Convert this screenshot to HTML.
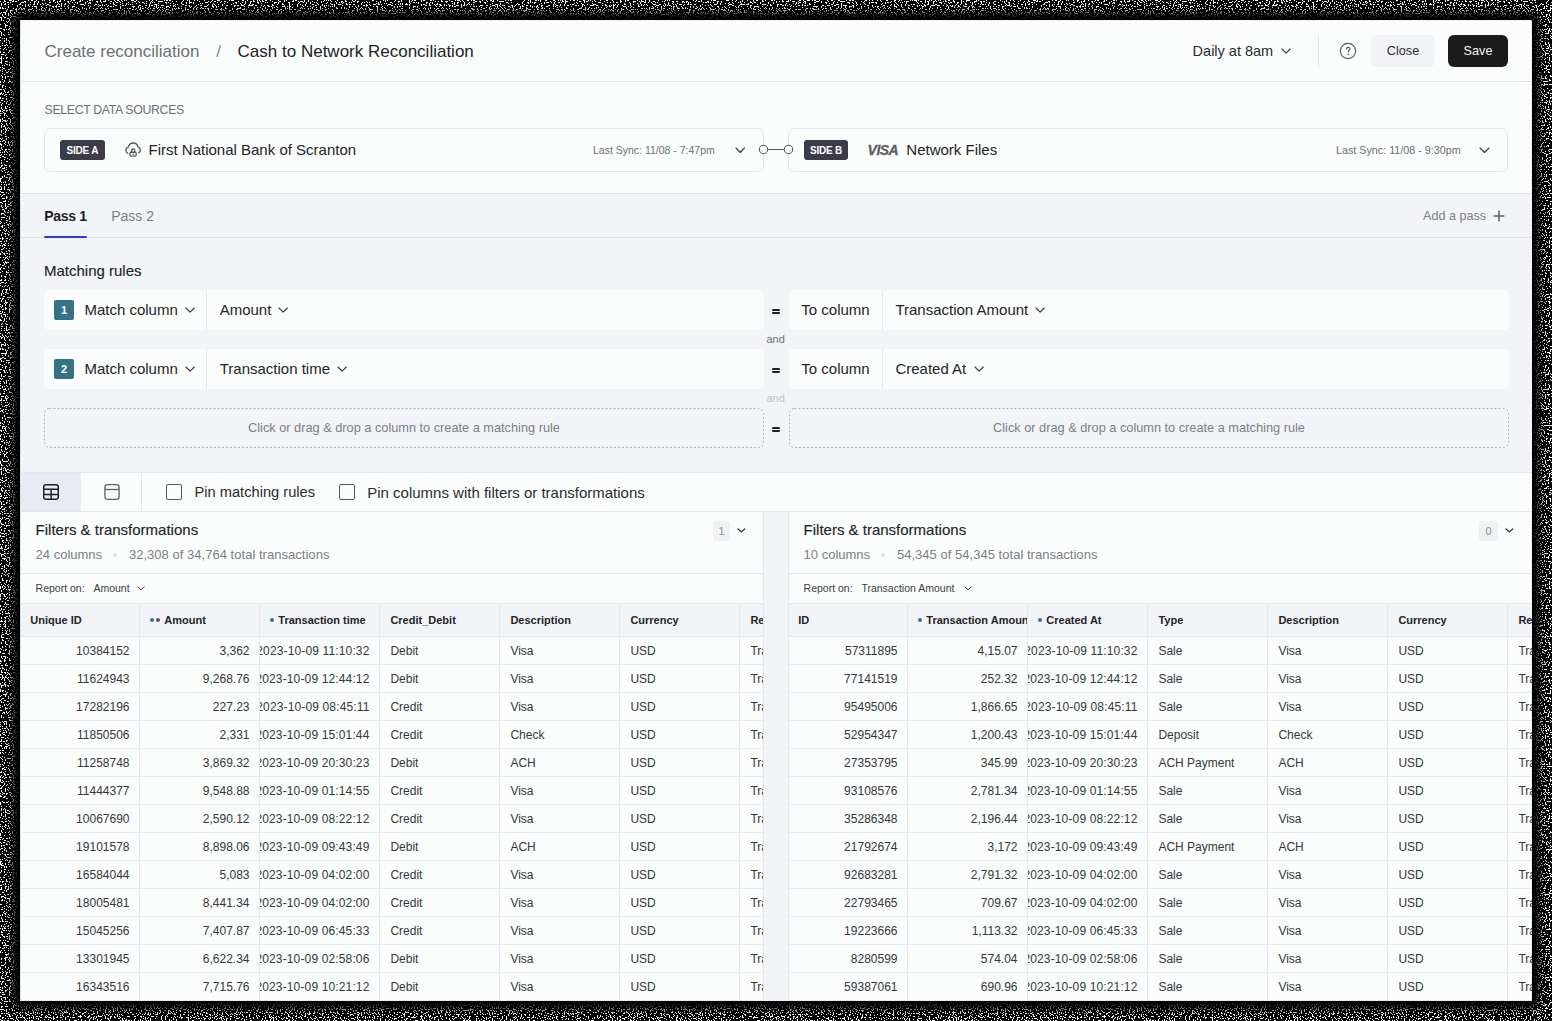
<!DOCTYPE html>
<html><head><meta charset="utf-8">
<style>
*{box-sizing:border-box;margin:0;padding:0}
html,body{width:1552px;height:1021px;overflow:hidden;background:#000;font-family:"Liberation Sans",sans-serif;color:#232526}
#noise{position:absolute;left:0;top:0;width:1552px;height:1021px}
#card{position:absolute;left:20px;top:20px;width:1512px;height:981px;background:#fbfcfc;border-radius:2px;box-shadow:inset 0 1px 0 #eef1f6, inset -1px 0 0 #eef1f6}
.t{position:absolute;white-space:nowrap;line-height:1}
.r{position:absolute}
.clip{position:absolute;overflow:hidden}
</style></head><body>
<svg id="noise" width="1552" height="1021">
<defs>
<filter id="nz" x="0" y="0" width="100%" height="100%">
<feTurbulence type="fractalNoise" baseFrequency="0.75" numOctaves="1" seed="3" result="n"/>
<feColorMatrix type="matrix" values="0 0 0 0 1  0 0 0 0 1  0 0 0 0 1  3 0 0 0 -1.25"/>
<feComponentTransfer><feFuncA type="discrete" tableValues="0 1"/></feComponentTransfer>
</filter>
<filter id="bl"><feGaussianBlur stdDeviation="4"/></filter>
</defs>
<rect width="1552" height="1021" fill="#000"/>
<rect width="1552" height="1021" filter="url(#nz)"/>
<rect x="12" y="12" width="1528" height="997" rx="8" fill="#000" filter="url(#bl)"/>
</svg>
<div id="card"></div>
<div class="t" style="left:44.50px;top:42.81px;font-size:17px;color:#6c7173;">Create reconciliation</div>
<div class="t" style="left:216.30px;top:42.81px;font-size:17px;color:#85898c;">/</div>
<div class="t" style="left:237.60px;top:42.81px;font-size:17px;color:#222425;">Cash to Network Reconciliation</div>
<div class="t" style="left:1192.60px;top:43.73px;font-size:14.5px;color:#2a2c2d;">Daily at 8am</div>
<svg class="r" style="left:1279.8px;top:46.8px" width="12.200000000000045" height="8.100000000000001"><polyline points="2,2 6.100000000000023,6.100000000000001 10.200000000000045,2" fill="none" stroke="#3a3c3e" stroke-width="1.1700000000000002" stroke-linecap="round" stroke-linejoin="round"/></svg>
<div class="r" style="left:1318px;top:35px;width:1px;height:32px;background:#e1e3ea;"></div>
<svg class="r" style="left:1338px;top:41px" width="20" height="20"><circle cx="10" cy="10" r="7.6" fill="none" stroke="#55595c" stroke-width="1.15"/><path d="M8.5 8.1 C8.5 7 9.3 6.3 10.2 6.3 C11.1 6.3 11.9 7 11.9 7.9 C11.9 9.1 10.4 9.3 10.3 10.9" fill="none" stroke="#55595c" stroke-width="1.15" stroke-linecap="round"/><circle cx="10.3" cy="13.4" r="0.8" fill="#55595c"/></svg>
<div class="r" style="left:1371px;top:35px;width:64px;height:32px;background:#f2f3f7;border-radius:6px"></div>
<div class="t" style="left:1103.00px;width:600px;text-align:center;top:45.25px;font-size:12.7px;color:#2a2c2d;">Close</div>
<div class="r" style="left:1448px;top:35px;width:60px;height:32px;background:#1b1b1b;border-radius:6px"></div>
<div class="t" style="left:1178.00px;width:600px;text-align:center;top:45.25px;font-size:12.7px;color:#f4f4f4;">Save</div>
<div class="r" style="left:20px;top:81px;width:1512px;height:1px;background:#e4e6ee;"></div>
<div class="t" style="left:44.60px;top:103.89px;font-size:12.3px;color:#6c7173;letter-spacing:-0.33px;">SELECT DATA SOURCES</div>
<div class="r" style="left:44px;top:128px;width:720px;height:44px;background:#fbfcfc;border:1px solid #e3e5ed;border-radius:6px;box-sizing:border-box"></div>
<div class="r" style="left:788px;top:128px;width:720px;height:44px;background:#fbfcfc;border:1px solid #e3e5ed;border-radius:6px;box-sizing:border-box"></div>
<div class="r" style="left:60px;top:140px;width:45px;height:20px;background:#3b3c47;border-radius:3px"></div>
<div class="t" style="left:-217.70px;width:600px;text-align:center;top:145.73px;font-size:10px;color:#ffffff;font-weight:700;letter-spacing:-0.2px;">SIDE A</div>
<div class="r" style="left:804px;top:140px;width:44px;height:20px;background:#3b3c47;border-radius:3px"></div>
<div class="t" style="left:526.00px;width:600px;text-align:center;top:145.73px;font-size:10px;color:#ffffff;font-weight:700;letter-spacing:-0.2px;">SIDE B</div>
<svg class="r" style="left:124px;top:141px" width="18" height="18"><path d="M3.6 12.4 C2.5 11.7 1.9 10.5 1.9 9.2 C1.9 7.7 2.9 6.6 4.3 6.2 C4.9 3.6 6.9 2 9.2 2 C11.5 2 13.3 3.5 13.9 5.8 C15.4 6.3 16.3 7.7 16.3 9.2 C16.3 10.3 15.7 11.3 14.6 11.8" fill="none" stroke="#55595c" stroke-width="1.3" stroke-linecap="round"/><rect x="5.95" y="11.25" width="6.2" height="3.9" rx="1" fill="none" stroke="#55595c" stroke-width="1.3"/><path d="M7.6 11.25 V9.6 A1.6 1.6 0 0 1 10.8 9.6 V11.25" fill="none" stroke="#55595c" stroke-width="1.3"/><circle cx="9.3" cy="13.3" r="0.75" fill="#55595c"/></svg>
<div class="t" style="left:148.50px;top:142.40px;font-size:15px;color:#232526;">First National Bank of Scranton</div>
<div class="t" style="left:593.00px;top:145.31px;font-size:10.5px;color:#6c7173;">Last Sync: 11/08 - 7:47pm</div>
<svg class="r" style="left:733.5px;top:145.9px" width="12.5" height="8.5"><polyline points="2,2 6.25,6.5 10.5,2" fill="none" stroke="#3a3c3e" stroke-width="1.1700000000000002" stroke-linecap="round" stroke-linejoin="round"/></svg>
<svg class="r" style="left:756px;top:142px" width="40" height="16"><line x1="11.5" y1="7.5" x2="28.5" y2="7.5" stroke="#595d60" stroke-width="1.1"/><circle cx="7.5" cy="7.5" r="4.2" fill="#fbfcfc" stroke="#5a5e61" stroke-width="1.1"/><circle cx="32.5" cy="7.5" r="4.2" fill="#fbfcfc" stroke="#5a5e61" stroke-width="1.1"/></svg>
<div class="t" style="left:867.60px;top:143.05px;font-size:14px;color:#5b6064;font-weight:700;letter-spacing:-0.55px;font-style:italic;-webkit-text-stroke:0.3px #5b6064;">VISA</div>
<div class="t" style="left:906.30px;top:142.40px;font-size:15px;color:#232526;">Network Files</div>
<div class="t" style="left:1336.00px;top:145.10px;font-size:10.75px;color:#6c7173;">Last Sync: 11/08 - 9:30pm</div>
<svg class="r" style="left:1478.0px;top:145.9px" width="13.0" height="8.5"><polyline points="2,2 6.5,6.5 11.0,2" fill="none" stroke="#3a3c3e" stroke-width="1.1700000000000002" stroke-linecap="round" stroke-linejoin="round"/></svg>
<div class="r" style="left:20px;top:193px;width:1512px;height:1px;background:#e4e6ee;"></div>
<div class="r" style="left:20px;top:194px;width:1512px;height:278px;background:#f3f4f8;"></div>
<div class="t" style="left:44.20px;top:208.85px;font-size:14px;color:#1d1e1f;font-weight:700;letter-spacing:-0.3px;">Pass 1</div>
<div class="t" style="left:111.20px;top:208.85px;font-size:14px;color:#7c8083;">Pass 2</div>
<div class="r" style="left:20px;top:237px;width:1512px;height:1px;background:#e2e4ea;"></div>
<div class="r" style="left:44px;top:236px;width:43px;height:2px;background:#3338d8;border-radius:1px"></div>
<div class="t" style="left:1423.00px;top:209.73px;font-size:12.6px;color:#7c8083;">Add a pass</div>
<svg class="r" style="left:1492px;top:209px" width="14" height="14"><path d="M7 2.2 V11.8 M2.2 7 H11.8" stroke="#5c6063" stroke-width="1.5" stroke-linecap="round"/></svg>
<div class="t" style="left:44.00px;top:262.90px;font-size:15px;color:#232526;-webkit-text-stroke:0.15px #232526;">Matching rules</div>
<div class="r" style="left:44px;top:290px;width:720px;height:40px;background:#fbfcfc;border-radius:5px"></div>
<div class="r" style="left:789px;top:290px;width:720px;height:40px;background:#fbfcfc;border-radius:5px"></div>
<div class="r" style="left:54px;top:300px;width:20px;height:20px;background:#357285;border-radius:2px"></div>
<div class="t" style="left:-236.00px;width:600px;text-align:center;top:304.99px;font-size:11px;color:#ffffff;font-weight:700;">1</div>
<div class="t" style="left:84.40px;top:302.10px;font-size:15px;color:#232526;">Match column</div>
<svg class="r" style="left:183.8px;top:305.59999999999997px" width="12.299999999999983" height="8.200000000000045"><polyline points="2,2 6.1499999999999915,6.2000000000000455 10.299999999999983,2" fill="none" stroke="#3a3c3e" stroke-width="1.1700000000000002" stroke-linecap="round" stroke-linejoin="round"/></svg>
<div class="r" style="left:206px;top:290px;width:1px;height:40px;background:#e6e8ee;"></div>
<div class="t" style="left:219.70px;top:302.10px;font-size:15px;color:#232526;">Amount</div>
<svg class="r" style="left:277.2px;top:305.59999999999997px" width="12.300000000000011" height="8.200000000000045"><polyline points="2,2 6.150000000000006,6.2000000000000455 10.300000000000011,2" fill="none" stroke="#3a3c3e" stroke-width="1.1700000000000002" stroke-linecap="round" stroke-linejoin="round"/></svg>
<div class="t" style="left:801.30px;top:302.10px;font-size:15px;color:#232526;">To column</div>
<div class="r" style="left:882px;top:290px;width:1px;height:40px;background:#e6e8ee;"></div>
<div class="t" style="left:895.40px;top:302.10px;font-size:15px;color:#232526;">Transaction Amount</div>
<svg class="r" style="left:1033.5px;top:305.59999999999997px" width="12.299999999999955" height="8.200000000000045"><polyline points="2,2 6.149999999999977,6.2000000000000455 10.299999999999955,2" fill="none" stroke="#3a3c3e" stroke-width="1.1700000000000002" stroke-linecap="round" stroke-linejoin="round"/></svg>
<div class="r" style="left:772px;top:308.5px;width:8px;height:2.1000000000000227px;background:#1e1f20;border-radius:1px"></div>
<div class="r" style="left:772px;top:312.1px;width:8px;height:2.099999999999966px;background:#1e1f20;border-radius:1px"></div>
<div class="t" style="left:766.50px;top:333.69px;font-size:11px;color:#6c7173;">and</div>
<div class="r" style="left:44px;top:349px;width:720px;height:40px;background:#fbfcfc;border-radius:5px"></div>
<div class="r" style="left:789px;top:349px;width:720px;height:40px;background:#fbfcfc;border-radius:5px"></div>
<div class="r" style="left:54px;top:359px;width:20px;height:20px;background:#357285;border-radius:2px"></div>
<div class="t" style="left:-236.00px;width:600px;text-align:center;top:363.99px;font-size:11px;color:#ffffff;font-weight:700;">2</div>
<div class="t" style="left:84.40px;top:361.10px;font-size:15px;color:#232526;">Match column</div>
<svg class="r" style="left:183.8px;top:364.59999999999997px" width="12.299999999999983" height="8.200000000000045"><polyline points="2,2 6.1499999999999915,6.2000000000000455 10.299999999999983,2" fill="none" stroke="#3a3c3e" stroke-width="1.1700000000000002" stroke-linecap="round" stroke-linejoin="round"/></svg>
<div class="r" style="left:206px;top:349px;width:1px;height:40px;background:#e6e8ee;"></div>
<div class="t" style="left:219.70px;top:361.10px;font-size:15px;color:#232526;">Transaction time</div>
<svg class="r" style="left:335.8px;top:364.59999999999997px" width="12.300000000000011" height="8.200000000000045"><polyline points="2,2 6.150000000000006,6.2000000000000455 10.300000000000011,2" fill="none" stroke="#3a3c3e" stroke-width="1.1700000000000002" stroke-linecap="round" stroke-linejoin="round"/></svg>
<div class="t" style="left:801.30px;top:361.10px;font-size:15px;color:#232526;">To column</div>
<div class="r" style="left:882px;top:349px;width:1px;height:40px;background:#e6e8ee;"></div>
<div class="t" style="left:895.40px;top:361.10px;font-size:15px;color:#232526;">Created At</div>
<svg class="r" style="left:973.0px;top:364.59999999999997px" width="12.299999999999955" height="8.200000000000045"><polyline points="2,2 6.149999999999977,6.2000000000000455 10.299999999999955,2" fill="none" stroke="#3a3c3e" stroke-width="1.1700000000000002" stroke-linecap="round" stroke-linejoin="round"/></svg>
<div class="r" style="left:772px;top:367.5px;width:8px;height:2.1000000000000227px;background:#1e1f20;border-radius:1px"></div>
<div class="r" style="left:772px;top:371.1px;width:8px;height:2.099999999999966px;background:#1e1f20;border-radius:1px"></div>
<div class="t" style="left:766.50px;top:392.69px;font-size:11px;color:#bfc2c6;">and</div>
<svg class="r" style="left:44px;top:408px" width="720" height="40"><rect x="0.5" y="0.5" width="719" height="39" rx="5" fill="none" stroke="#aeb1b7" stroke-dasharray="2 2"/></svg>
<svg class="r" style="left:789px;top:408px" width="720" height="40"><rect x="0.5" y="0.5" width="719" height="39" rx="5" fill="none" stroke="#aeb1b7" stroke-dasharray="2 2"/></svg>
<div class="t" style="left:104.00px;width:600px;text-align:center;top:421.51px;font-size:12.75px;color:#7a7f82;">Click or drag &amp; drop a column to create a matching rule</div>
<div class="t" style="left:849.00px;width:600px;text-align:center;top:421.51px;font-size:12.75px;color:#7a7f82;">Click or drag &amp; drop a column to create a matching rule</div>
<div class="r" style="left:772px;top:426.5px;width:8px;height:2.1000000000000227px;background:#1e1f20;border-radius:1px"></div>
<div class="r" style="left:772px;top:430.1px;width:8px;height:2.099999999999966px;background:#1e1f20;border-radius:1px"></div>
<div class="r" style="left:20px;top:472px;width:1512px;height:1px;background:#e4e6ee;"></div>
<div class="r" style="left:20px;top:473px;width:1512px;height:38px;background:#fbfcfc;"></div>
<div class="r" style="left:20px;top:473px;width:61px;height:38px;background:#e8ebf3;"></div>
<div class="r" style="left:141px;top:473px;width:1px;height:38px;background:#e4e6ee;"></div>
<svg class="r" style="left:41px;top:482px" width="20" height="20"><rect x="2.7" y="2.7" width="14.6" height="14.6" rx="2.6" fill="none" stroke="#1e1f20" stroke-width="1.4"/><path d="M2.7 7.2 H17.3 M2.7 12.5 H17.3 M10.1 7.2 V17.3" stroke="#1e1f20" stroke-width="1.4"/></svg>
<svg class="r" style="left:102px;top:482px" width="20" height="20"><rect x="2.9" y="2.7" width="14.2" height="14.6" rx="2.6" fill="none" stroke="#5f6366" stroke-width="1.3"/><path d="M2.9 7.5 H17.1" stroke="#5f6366" stroke-width="1.3"/></svg>
<div class="r" style="left:166px;top:484px;width:16px;height:16px;background:transparent;border:1.3px solid #54585c;border-radius:2px;box-sizing:border-box"></div>
<div class="t" style="left:194.50px;top:484.99px;font-size:14.66px;color:#2a2c2e;">Pin matching rules</div>
<div class="r" style="left:339px;top:484px;width:16px;height:16px;background:transparent;border:1.3px solid #54585c;border-radius:2px;box-sizing:border-box"></div>
<div class="t" style="left:367.20px;top:484.70px;font-size:15px;color:#2a2c2e;">Pin columns with filters or transformations</div>
<div class="r" style="left:20px;top:511px;width:1512px;height:1px;background:#e4e6ee;"></div>
<div class="r" style="left:764px;top:512px;width:24px;height:489px;background:#f3f4f8;"></div>
<div class="r" style="left:763px;top:511px;width:1px;height:490px;background:#e4e6ee;"></div>
<div class="r" style="left:788px;top:511px;width:1px;height:490px;background:#e4e6ee;"></div>
<div class="t" style="left:35.60px;top:522.00px;font-size:15px;color:#232526;-webkit-text-stroke:0.15px #232526;">Filters &amp; transformations</div>
<div class="t" style="left:35.60px;top:548.20px;font-size:13px;color:#7c8083;">24 columns</div>
<div class="r" style="left:113.3px;top:553px;width:4px;height:4px;border-radius:2px;background:#dcdfe4"></div>
<div class="t" style="left:128.90px;top:548.20px;font-size:13px;color:#7c8083;letter-spacing:0.03px;">32,308 of 34,764 total transactions</div>
<div class="r" style="left:21px;top:573px;width:742px;height:1px;background:#e4e6ee;"></div>
<div class="t" style="left:35.60px;top:583.11px;font-size:10.5px;color:#3c3f42;">Report on:</div>
<div class="t" style="left:93.40px;top:583.11px;font-size:10.5px;color:#3c3f42;">Amount</div>
<svg class="r" style="left:136.3px;top:585.4px" width="10.199999999999989" height="6.900000000000091"><polyline points="2,2 5.099999999999994,4.900000000000091 8.199999999999989,2" fill="none" stroke="#3c3f42" stroke-width="0.9900000000000001" stroke-linecap="round" stroke-linejoin="round"/></svg>
<div class="clip" style="left:21px;top:603px;width:742px;height:398px">
<div class="r" style="left:0;top:0;width:742px;height:34px;background:#f3f4f8;border-top:1px solid #e4e6ee;border-bottom:1px solid #e4e6ee"></div>
<div class="r" style="left:118px;top:0;width:1px;height:398px;background:#e6e8ee"></div>
<div class="r" style="left:238px;top:0;width:1px;height:398px;background:#e6e8ee"></div>
<div class="r" style="left:358px;top:0;width:1px;height:398px;background:#e6e8ee"></div>
<div class="r" style="left:478px;top:0;width:1px;height:398px;background:#e6e8ee"></div>
<div class="r" style="left:598px;top:0;width:1px;height:398px;background:#e6e8ee"></div>
<div class="r" style="left:718px;top:0;width:1px;height:398px;background:#e6e8ee"></div>
<div class="r" style="left:0;top:61px;width:742px;height:1px;background:#e8eaef"></div>
<div class="r" style="left:0;top:89px;width:742px;height:1px;background:#e8eaef"></div>
<div class="r" style="left:0;top:117px;width:742px;height:1px;background:#e8eaef"></div>
<div class="r" style="left:0;top:145px;width:742px;height:1px;background:#e8eaef"></div>
<div class="r" style="left:0;top:173px;width:742px;height:1px;background:#e8eaef"></div>
<div class="r" style="left:0;top:201px;width:742px;height:1px;background:#e8eaef"></div>
<div class="r" style="left:0;top:229px;width:742px;height:1px;background:#e8eaef"></div>
<div class="r" style="left:0;top:257px;width:742px;height:1px;background:#e8eaef"></div>
<div class="r" style="left:0;top:285px;width:742px;height:1px;background:#e8eaef"></div>
<div class="r" style="left:0;top:313px;width:742px;height:1px;background:#e8eaef"></div>
<div class="r" style="left:0;top:341px;width:742px;height:1px;background:#e8eaef"></div>
<div class="r" style="left:0;top:369px;width:742px;height:1px;background:#e8eaef"></div>
<div class="r" style="left:0;top:397px;width:742px;height:1px;background:#e8eaef"></div>
<div class="clip" style="left:0px;top:0;width:118px;height:398px">
<div class="t" style="left:9.30px;top:11.69px;font-size:11px;color:#232526;font-weight:700;">Unique ID</div>
<div class="t" style="right:9.50px;top:42.44px;font-size:12px;color:#35383a;">10384152</div>
<div class="t" style="right:9.50px;top:70.44px;font-size:12px;color:#35383a;">11624943</div>
<div class="t" style="right:9.50px;top:98.44px;font-size:12px;color:#35383a;">17282196</div>
<div class="t" style="right:9.50px;top:126.44px;font-size:12px;color:#35383a;">11850506</div>
<div class="t" style="right:9.50px;top:154.44px;font-size:12px;color:#35383a;">11258748</div>
<div class="t" style="right:9.50px;top:182.44px;font-size:12px;color:#35383a;">11444377</div>
<div class="t" style="right:9.50px;top:210.44px;font-size:12px;color:#35383a;">10067690</div>
<div class="t" style="right:9.50px;top:238.44px;font-size:12px;color:#35383a;">19101578</div>
<div class="t" style="right:9.50px;top:266.44px;font-size:12px;color:#35383a;">16584044</div>
<div class="t" style="right:9.50px;top:294.44px;font-size:12px;color:#35383a;">18005481</div>
<div class="t" style="right:9.50px;top:322.44px;font-size:12px;color:#35383a;">15045256</div>
<div class="t" style="right:9.50px;top:350.44px;font-size:12px;color:#35383a;">13301945</div>
<div class="t" style="right:9.50px;top:378.44px;font-size:12px;color:#35383a;">16343516</div>
</div>
<div class="clip" style="left:119px;top:0;width:119px;height:398px">
<div class="r" style="left:10.0px;top:15px;width:4px;height:4px;border-radius:2px;background:#357285"></div>
<div class="r" style="left:16.0px;top:15px;width:4px;height:4px;border-radius:2px;background:#55585b"></div>
<div class="t" style="left:24.30px;top:11.69px;font-size:11px;color:#232526;font-weight:700;">Amount</div>
<div class="t" style="right:9.50px;top:42.44px;font-size:12px;color:#35383a;">3,362</div>
<div class="t" style="right:9.50px;top:70.44px;font-size:12px;color:#35383a;">9,268.76</div>
<div class="t" style="right:9.50px;top:98.44px;font-size:12px;color:#35383a;">227.23</div>
<div class="t" style="right:9.50px;top:126.44px;font-size:12px;color:#35383a;">2,331</div>
<div class="t" style="right:9.50px;top:154.44px;font-size:12px;color:#35383a;">3,869.32</div>
<div class="t" style="right:9.50px;top:182.44px;font-size:12px;color:#35383a;">9,548.88</div>
<div class="t" style="right:9.50px;top:210.44px;font-size:12px;color:#35383a;">2,590.12</div>
<div class="t" style="right:9.50px;top:238.44px;font-size:12px;color:#35383a;">8,898.06</div>
<div class="t" style="right:9.50px;top:266.44px;font-size:12px;color:#35383a;">5,083</div>
<div class="t" style="right:9.50px;top:294.44px;font-size:12px;color:#35383a;">8,441.34</div>
<div class="t" style="right:9.50px;top:322.44px;font-size:12px;color:#35383a;">7,407.87</div>
<div class="t" style="right:9.50px;top:350.44px;font-size:12px;color:#35383a;">6,622.34</div>
<div class="t" style="right:9.50px;top:378.44px;font-size:12px;color:#35383a;">7,715.76</div>
</div>
<div class="clip" style="left:239px;top:0;width:119px;height:398px">
<div class="r" style="left:10.0px;top:15px;width:4px;height:4px;border-radius:2px;background:#357285"></div>
<div class="t" style="left:18.30px;top:11.69px;font-size:11px;color:#232526;font-weight:700;">Transaction time</div>
<div class="t" style="right:9.50px;top:42.44px;font-size:12px;color:#35383a;letter-spacing:0.14px;">2023-10-09 11:10:32</div>
<div class="t" style="right:9.50px;top:70.44px;font-size:12px;color:#35383a;letter-spacing:0.14px;">2023-10-09 12:44:12</div>
<div class="t" style="right:9.50px;top:98.44px;font-size:12px;color:#35383a;letter-spacing:0.14px;">2023-10-09 08:45:11</div>
<div class="t" style="right:9.50px;top:126.44px;font-size:12px;color:#35383a;letter-spacing:0.14px;">2023-10-09 15:01:44</div>
<div class="t" style="right:9.50px;top:154.44px;font-size:12px;color:#35383a;letter-spacing:0.14px;">2023-10-09 20:30:23</div>
<div class="t" style="right:9.50px;top:182.44px;font-size:12px;color:#35383a;letter-spacing:0.14px;">2023-10-09 01:14:55</div>
<div class="t" style="right:9.50px;top:210.44px;font-size:12px;color:#35383a;letter-spacing:0.14px;">2023-10-09 08:22:12</div>
<div class="t" style="right:9.50px;top:238.44px;font-size:12px;color:#35383a;letter-spacing:0.14px;">2023-10-09 09:43:49</div>
<div class="t" style="right:9.50px;top:266.44px;font-size:12px;color:#35383a;letter-spacing:0.14px;">2023-10-09 04:02:00</div>
<div class="t" style="right:9.50px;top:294.44px;font-size:12px;color:#35383a;letter-spacing:0.14px;">2023-10-09 04:02:00</div>
<div class="t" style="right:9.50px;top:322.44px;font-size:12px;color:#35383a;letter-spacing:0.14px;">2023-10-09 06:45:33</div>
<div class="t" style="right:9.50px;top:350.44px;font-size:12px;color:#35383a;letter-spacing:0.14px;">2023-10-09 02:58:06</div>
<div class="t" style="right:9.50px;top:378.44px;font-size:12px;color:#35383a;letter-spacing:0.14px;">2023-10-09 10:21:12</div>
</div>
<div class="clip" style="left:359px;top:0;width:119px;height:398px">
<div class="t" style="left:10.40px;top:11.69px;font-size:11px;color:#232526;font-weight:700;">Credit_Debit</div>
<div class="t" style="left:10.40px;top:42.44px;font-size:12px;color:#35383a;">Debit</div>
<div class="t" style="left:10.40px;top:70.44px;font-size:12px;color:#35383a;">Debit</div>
<div class="t" style="left:10.40px;top:98.44px;font-size:12px;color:#35383a;">Credit</div>
<div class="t" style="left:10.40px;top:126.44px;font-size:12px;color:#35383a;">Credit</div>
<div class="t" style="left:10.40px;top:154.44px;font-size:12px;color:#35383a;">Debit</div>
<div class="t" style="left:10.40px;top:182.44px;font-size:12px;color:#35383a;">Credit</div>
<div class="t" style="left:10.40px;top:210.44px;font-size:12px;color:#35383a;">Credit</div>
<div class="t" style="left:10.40px;top:238.44px;font-size:12px;color:#35383a;">Debit</div>
<div class="t" style="left:10.40px;top:266.44px;font-size:12px;color:#35383a;">Credit</div>
<div class="t" style="left:10.40px;top:294.44px;font-size:12px;color:#35383a;">Credit</div>
<div class="t" style="left:10.40px;top:322.44px;font-size:12px;color:#35383a;">Credit</div>
<div class="t" style="left:10.40px;top:350.44px;font-size:12px;color:#35383a;">Debit</div>
<div class="t" style="left:10.40px;top:378.44px;font-size:12px;color:#35383a;">Debit</div>
</div>
<div class="clip" style="left:479px;top:0;width:119px;height:398px">
<div class="t" style="left:10.40px;top:11.69px;font-size:11px;color:#232526;font-weight:700;">Description</div>
<div class="t" style="left:10.40px;top:42.44px;font-size:12px;color:#35383a;">Visa</div>
<div class="t" style="left:10.40px;top:70.44px;font-size:12px;color:#35383a;">Visa</div>
<div class="t" style="left:10.40px;top:98.44px;font-size:12px;color:#35383a;">Visa</div>
<div class="t" style="left:10.40px;top:126.44px;font-size:12px;color:#35383a;">Check</div>
<div class="t" style="left:10.40px;top:154.44px;font-size:12px;color:#35383a;">ACH</div>
<div class="t" style="left:10.40px;top:182.44px;font-size:12px;color:#35383a;">Visa</div>
<div class="t" style="left:10.40px;top:210.44px;font-size:12px;color:#35383a;">Visa</div>
<div class="t" style="left:10.40px;top:238.44px;font-size:12px;color:#35383a;">ACH</div>
<div class="t" style="left:10.40px;top:266.44px;font-size:12px;color:#35383a;">Visa</div>
<div class="t" style="left:10.40px;top:294.44px;font-size:12px;color:#35383a;">Visa</div>
<div class="t" style="left:10.40px;top:322.44px;font-size:12px;color:#35383a;">Visa</div>
<div class="t" style="left:10.40px;top:350.44px;font-size:12px;color:#35383a;">Visa</div>
<div class="t" style="left:10.40px;top:378.44px;font-size:12px;color:#35383a;">Visa</div>
</div>
<div class="clip" style="left:599px;top:0;width:119px;height:398px">
<div class="t" style="left:10.40px;top:11.69px;font-size:11px;color:#232526;font-weight:700;">Currency</div>
<div class="t" style="left:10.40px;top:42.44px;font-size:12px;color:#35383a;">USD</div>
<div class="t" style="left:10.40px;top:70.44px;font-size:12px;color:#35383a;">USD</div>
<div class="t" style="left:10.40px;top:98.44px;font-size:12px;color:#35383a;">USD</div>
<div class="t" style="left:10.40px;top:126.44px;font-size:12px;color:#35383a;">USD</div>
<div class="t" style="left:10.40px;top:154.44px;font-size:12px;color:#35383a;">USD</div>
<div class="t" style="left:10.40px;top:182.44px;font-size:12px;color:#35383a;">USD</div>
<div class="t" style="left:10.40px;top:210.44px;font-size:12px;color:#35383a;">USD</div>
<div class="t" style="left:10.40px;top:238.44px;font-size:12px;color:#35383a;">USD</div>
<div class="t" style="left:10.40px;top:266.44px;font-size:12px;color:#35383a;">USD</div>
<div class="t" style="left:10.40px;top:294.44px;font-size:12px;color:#35383a;">USD</div>
<div class="t" style="left:10.40px;top:322.44px;font-size:12px;color:#35383a;">USD</div>
<div class="t" style="left:10.40px;top:350.44px;font-size:12px;color:#35383a;">USD</div>
<div class="t" style="left:10.40px;top:378.44px;font-size:12px;color:#35383a;">USD</div>
</div>
<div class="clip" style="left:719px;top:0;width:119px;height:398px">
<div class="t" style="left:10.40px;top:11.69px;font-size:11px;color:#232526;font-weight:700;">Reference</div>
<div class="t" style="left:10.40px;top:42.44px;font-size:12px;color:#35383a;">Transfer</div>
<div class="t" style="left:10.40px;top:70.44px;font-size:12px;color:#35383a;">Transfer</div>
<div class="t" style="left:10.40px;top:98.44px;font-size:12px;color:#35383a;">Transfer</div>
<div class="t" style="left:10.40px;top:126.44px;font-size:12px;color:#35383a;">Transfer</div>
<div class="t" style="left:10.40px;top:154.44px;font-size:12px;color:#35383a;">Transfer</div>
<div class="t" style="left:10.40px;top:182.44px;font-size:12px;color:#35383a;">Transfer</div>
<div class="t" style="left:10.40px;top:210.44px;font-size:12px;color:#35383a;">Transfer</div>
<div class="t" style="left:10.40px;top:238.44px;font-size:12px;color:#35383a;">Transfer</div>
<div class="t" style="left:10.40px;top:266.44px;font-size:12px;color:#35383a;">Transfer</div>
<div class="t" style="left:10.40px;top:294.44px;font-size:12px;color:#35383a;">Transfer</div>
<div class="t" style="left:10.40px;top:322.44px;font-size:12px;color:#35383a;">Transfer</div>
<div class="t" style="left:10.40px;top:350.44px;font-size:12px;color:#35383a;">Transfer</div>
<div class="t" style="left:10.40px;top:378.44px;font-size:12px;color:#35383a;">Transfer</div>
</div>
</div>
<div class="t" style="left:803.60px;top:522.00px;font-size:15px;color:#232526;-webkit-text-stroke:0.15px #232526;">Filters &amp; transformations</div>
<div class="t" style="left:803.60px;top:548.20px;font-size:13px;color:#7c8083;">10 columns</div>
<div class="r" style="left:881.3px;top:553px;width:4px;height:4px;border-radius:2px;background:#dcdfe4"></div>
<div class="t" style="left:896.90px;top:548.20px;font-size:13px;color:#7c8083;letter-spacing:0.03px;">54,345 of 54,345 total transactions</div>
<div class="r" style="left:789px;top:573px;width:743px;height:1px;background:#e4e6ee;"></div>
<div class="t" style="left:803.60px;top:583.11px;font-size:10.5px;color:#3c3f42;">Report on:</div>
<div class="t" style="left:861.40px;top:583.11px;font-size:10.5px;color:#3c3f42;">Transaction Amount</div>
<svg class="r" style="left:962.5px;top:585.4px" width="10.200000000000045" height="6.900000000000091"><polyline points="2,2 5.100000000000023,4.900000000000091 8.200000000000045,2" fill="none" stroke="#3c3f42" stroke-width="0.9900000000000001" stroke-linecap="round" stroke-linejoin="round"/></svg>
<div class="clip" style="left:789px;top:603px;width:743px;height:398px">
<div class="r" style="left:0;top:0;width:743px;height:34px;background:#f3f4f8;border-top:1px solid #e4e6ee;border-bottom:1px solid #e4e6ee"></div>
<div class="r" style="left:118px;top:0;width:1px;height:398px;background:#e6e8ee"></div>
<div class="r" style="left:238px;top:0;width:1px;height:398px;background:#e6e8ee"></div>
<div class="r" style="left:358px;top:0;width:1px;height:398px;background:#e6e8ee"></div>
<div class="r" style="left:478px;top:0;width:1px;height:398px;background:#e6e8ee"></div>
<div class="r" style="left:598px;top:0;width:1px;height:398px;background:#e6e8ee"></div>
<div class="r" style="left:718px;top:0;width:1px;height:398px;background:#e6e8ee"></div>
<div class="r" style="left:0;top:61px;width:743px;height:1px;background:#e8eaef"></div>
<div class="r" style="left:0;top:89px;width:743px;height:1px;background:#e8eaef"></div>
<div class="r" style="left:0;top:117px;width:743px;height:1px;background:#e8eaef"></div>
<div class="r" style="left:0;top:145px;width:743px;height:1px;background:#e8eaef"></div>
<div class="r" style="left:0;top:173px;width:743px;height:1px;background:#e8eaef"></div>
<div class="r" style="left:0;top:201px;width:743px;height:1px;background:#e8eaef"></div>
<div class="r" style="left:0;top:229px;width:743px;height:1px;background:#e8eaef"></div>
<div class="r" style="left:0;top:257px;width:743px;height:1px;background:#e8eaef"></div>
<div class="r" style="left:0;top:285px;width:743px;height:1px;background:#e8eaef"></div>
<div class="r" style="left:0;top:313px;width:743px;height:1px;background:#e8eaef"></div>
<div class="r" style="left:0;top:341px;width:743px;height:1px;background:#e8eaef"></div>
<div class="r" style="left:0;top:369px;width:743px;height:1px;background:#e8eaef"></div>
<div class="r" style="left:0;top:397px;width:743px;height:1px;background:#e8eaef"></div>
<div class="clip" style="left:0px;top:0;width:118px;height:398px">
<div class="t" style="left:9.30px;top:11.69px;font-size:11px;color:#232526;font-weight:700;">ID</div>
<div class="t" style="right:9.50px;top:42.44px;font-size:12px;color:#35383a;">57311895</div>
<div class="t" style="right:9.50px;top:70.44px;font-size:12px;color:#35383a;">77141519</div>
<div class="t" style="right:9.50px;top:98.44px;font-size:12px;color:#35383a;">95495006</div>
<div class="t" style="right:9.50px;top:126.44px;font-size:12px;color:#35383a;">52954347</div>
<div class="t" style="right:9.50px;top:154.44px;font-size:12px;color:#35383a;">27353795</div>
<div class="t" style="right:9.50px;top:182.44px;font-size:12px;color:#35383a;">93108576</div>
<div class="t" style="right:9.50px;top:210.44px;font-size:12px;color:#35383a;">35286348</div>
<div class="t" style="right:9.50px;top:238.44px;font-size:12px;color:#35383a;">21792674</div>
<div class="t" style="right:9.50px;top:266.44px;font-size:12px;color:#35383a;">92683281</div>
<div class="t" style="right:9.50px;top:294.44px;font-size:12px;color:#35383a;">22793465</div>
<div class="t" style="right:9.50px;top:322.44px;font-size:12px;color:#35383a;">19223666</div>
<div class="t" style="right:9.50px;top:350.44px;font-size:12px;color:#35383a;">8280599</div>
<div class="t" style="right:9.50px;top:378.44px;font-size:12px;color:#35383a;">59387061</div>
</div>
<div class="clip" style="left:119px;top:0;width:119px;height:398px">
<div class="r" style="left:10.0px;top:15px;width:4px;height:4px;border-radius:2px;background:#357285"></div>
<div class="t" style="left:18.30px;top:11.69px;font-size:11px;color:#232526;font-weight:700;">Transaction Amount</div>
<div class="t" style="right:9.50px;top:42.44px;font-size:12px;color:#35383a;">4,15.07</div>
<div class="t" style="right:9.50px;top:70.44px;font-size:12px;color:#35383a;">252.32</div>
<div class="t" style="right:9.50px;top:98.44px;font-size:12px;color:#35383a;">1,866.65</div>
<div class="t" style="right:9.50px;top:126.44px;font-size:12px;color:#35383a;">1,200.43</div>
<div class="t" style="right:9.50px;top:154.44px;font-size:12px;color:#35383a;">345.99</div>
<div class="t" style="right:9.50px;top:182.44px;font-size:12px;color:#35383a;">2,781.34</div>
<div class="t" style="right:9.50px;top:210.44px;font-size:12px;color:#35383a;">2,196.44</div>
<div class="t" style="right:9.50px;top:238.44px;font-size:12px;color:#35383a;">3,172</div>
<div class="t" style="right:9.50px;top:266.44px;font-size:12px;color:#35383a;">2,791.32</div>
<div class="t" style="right:9.50px;top:294.44px;font-size:12px;color:#35383a;">709.67</div>
<div class="t" style="right:9.50px;top:322.44px;font-size:12px;color:#35383a;">1,113.32</div>
<div class="t" style="right:9.50px;top:350.44px;font-size:12px;color:#35383a;">574.04</div>
<div class="t" style="right:9.50px;top:378.44px;font-size:12px;color:#35383a;">690.96</div>
</div>
<div class="clip" style="left:239px;top:0;width:119px;height:398px">
<div class="r" style="left:10.0px;top:15px;width:4px;height:4px;border-radius:2px;background:#357285"></div>
<div class="t" style="left:18.30px;top:11.69px;font-size:11px;color:#232526;font-weight:700;">Created At</div>
<div class="t" style="right:9.50px;top:42.44px;font-size:12px;color:#35383a;letter-spacing:0.14px;">2023-10-09 11:10:32</div>
<div class="t" style="right:9.50px;top:70.44px;font-size:12px;color:#35383a;letter-spacing:0.14px;">2023-10-09 12:44:12</div>
<div class="t" style="right:9.50px;top:98.44px;font-size:12px;color:#35383a;letter-spacing:0.14px;">2023-10-09 08:45:11</div>
<div class="t" style="right:9.50px;top:126.44px;font-size:12px;color:#35383a;letter-spacing:0.14px;">2023-10-09 15:01:44</div>
<div class="t" style="right:9.50px;top:154.44px;font-size:12px;color:#35383a;letter-spacing:0.14px;">2023-10-09 20:30:23</div>
<div class="t" style="right:9.50px;top:182.44px;font-size:12px;color:#35383a;letter-spacing:0.14px;">2023-10-09 01:14:55</div>
<div class="t" style="right:9.50px;top:210.44px;font-size:12px;color:#35383a;letter-spacing:0.14px;">2023-10-09 08:22:12</div>
<div class="t" style="right:9.50px;top:238.44px;font-size:12px;color:#35383a;letter-spacing:0.14px;">2023-10-09 09:43:49</div>
<div class="t" style="right:9.50px;top:266.44px;font-size:12px;color:#35383a;letter-spacing:0.14px;">2023-10-09 04:02:00</div>
<div class="t" style="right:9.50px;top:294.44px;font-size:12px;color:#35383a;letter-spacing:0.14px;">2023-10-09 04:02:00</div>
<div class="t" style="right:9.50px;top:322.44px;font-size:12px;color:#35383a;letter-spacing:0.14px;">2023-10-09 06:45:33</div>
<div class="t" style="right:9.50px;top:350.44px;font-size:12px;color:#35383a;letter-spacing:0.14px;">2023-10-09 02:58:06</div>
<div class="t" style="right:9.50px;top:378.44px;font-size:12px;color:#35383a;letter-spacing:0.14px;">2023-10-09 10:21:12</div>
</div>
<div class="clip" style="left:359px;top:0;width:119px;height:398px">
<div class="t" style="left:10.40px;top:11.69px;font-size:11px;color:#232526;font-weight:700;">Type</div>
<div class="t" style="left:10.40px;top:42.44px;font-size:12px;color:#35383a;">Sale</div>
<div class="t" style="left:10.40px;top:70.44px;font-size:12px;color:#35383a;">Sale</div>
<div class="t" style="left:10.40px;top:98.44px;font-size:12px;color:#35383a;">Sale</div>
<div class="t" style="left:10.40px;top:126.44px;font-size:12px;color:#35383a;">Deposit</div>
<div class="t" style="left:10.40px;top:154.44px;font-size:12px;color:#35383a;">ACH Payment</div>
<div class="t" style="left:10.40px;top:182.44px;font-size:12px;color:#35383a;">Sale</div>
<div class="t" style="left:10.40px;top:210.44px;font-size:12px;color:#35383a;">Sale</div>
<div class="t" style="left:10.40px;top:238.44px;font-size:12px;color:#35383a;">ACH Payment</div>
<div class="t" style="left:10.40px;top:266.44px;font-size:12px;color:#35383a;">Sale</div>
<div class="t" style="left:10.40px;top:294.44px;font-size:12px;color:#35383a;">Sale</div>
<div class="t" style="left:10.40px;top:322.44px;font-size:12px;color:#35383a;">Sale</div>
<div class="t" style="left:10.40px;top:350.44px;font-size:12px;color:#35383a;">Sale</div>
<div class="t" style="left:10.40px;top:378.44px;font-size:12px;color:#35383a;">Sale</div>
</div>
<div class="clip" style="left:479px;top:0;width:119px;height:398px">
<div class="t" style="left:10.40px;top:11.69px;font-size:11px;color:#232526;font-weight:700;">Description</div>
<div class="t" style="left:10.40px;top:42.44px;font-size:12px;color:#35383a;">Visa</div>
<div class="t" style="left:10.40px;top:70.44px;font-size:12px;color:#35383a;">Visa</div>
<div class="t" style="left:10.40px;top:98.44px;font-size:12px;color:#35383a;">Visa</div>
<div class="t" style="left:10.40px;top:126.44px;font-size:12px;color:#35383a;">Check</div>
<div class="t" style="left:10.40px;top:154.44px;font-size:12px;color:#35383a;">ACH</div>
<div class="t" style="left:10.40px;top:182.44px;font-size:12px;color:#35383a;">Visa</div>
<div class="t" style="left:10.40px;top:210.44px;font-size:12px;color:#35383a;">Visa</div>
<div class="t" style="left:10.40px;top:238.44px;font-size:12px;color:#35383a;">ACH</div>
<div class="t" style="left:10.40px;top:266.44px;font-size:12px;color:#35383a;">Visa</div>
<div class="t" style="left:10.40px;top:294.44px;font-size:12px;color:#35383a;">Visa</div>
<div class="t" style="left:10.40px;top:322.44px;font-size:12px;color:#35383a;">Visa</div>
<div class="t" style="left:10.40px;top:350.44px;font-size:12px;color:#35383a;">Visa</div>
<div class="t" style="left:10.40px;top:378.44px;font-size:12px;color:#35383a;">Visa</div>
</div>
<div class="clip" style="left:599px;top:0;width:119px;height:398px">
<div class="t" style="left:10.40px;top:11.69px;font-size:11px;color:#232526;font-weight:700;">Currency</div>
<div class="t" style="left:10.40px;top:42.44px;font-size:12px;color:#35383a;">USD</div>
<div class="t" style="left:10.40px;top:70.44px;font-size:12px;color:#35383a;">USD</div>
<div class="t" style="left:10.40px;top:98.44px;font-size:12px;color:#35383a;">USD</div>
<div class="t" style="left:10.40px;top:126.44px;font-size:12px;color:#35383a;">USD</div>
<div class="t" style="left:10.40px;top:154.44px;font-size:12px;color:#35383a;">USD</div>
<div class="t" style="left:10.40px;top:182.44px;font-size:12px;color:#35383a;">USD</div>
<div class="t" style="left:10.40px;top:210.44px;font-size:12px;color:#35383a;">USD</div>
<div class="t" style="left:10.40px;top:238.44px;font-size:12px;color:#35383a;">USD</div>
<div class="t" style="left:10.40px;top:266.44px;font-size:12px;color:#35383a;">USD</div>
<div class="t" style="left:10.40px;top:294.44px;font-size:12px;color:#35383a;">USD</div>
<div class="t" style="left:10.40px;top:322.44px;font-size:12px;color:#35383a;">USD</div>
<div class="t" style="left:10.40px;top:350.44px;font-size:12px;color:#35383a;">USD</div>
<div class="t" style="left:10.40px;top:378.44px;font-size:12px;color:#35383a;">USD</div>
</div>
<div class="clip" style="left:719px;top:0;width:119px;height:398px">
<div class="t" style="left:10.40px;top:11.69px;font-size:11px;color:#232526;font-weight:700;">Reference</div>
<div class="t" style="left:10.40px;top:42.44px;font-size:12px;color:#35383a;">Transfer</div>
<div class="t" style="left:10.40px;top:70.44px;font-size:12px;color:#35383a;">Transfer</div>
<div class="t" style="left:10.40px;top:98.44px;font-size:12px;color:#35383a;">Transfer</div>
<div class="t" style="left:10.40px;top:126.44px;font-size:12px;color:#35383a;">Transfer</div>
<div class="t" style="left:10.40px;top:154.44px;font-size:12px;color:#35383a;">Transfer</div>
<div class="t" style="left:10.40px;top:182.44px;font-size:12px;color:#35383a;">Transfer</div>
<div class="t" style="left:10.40px;top:210.44px;font-size:12px;color:#35383a;">Transfer</div>
<div class="t" style="left:10.40px;top:238.44px;font-size:12px;color:#35383a;">Transfer</div>
<div class="t" style="left:10.40px;top:266.44px;font-size:12px;color:#35383a;">Transfer</div>
<div class="t" style="left:10.40px;top:294.44px;font-size:12px;color:#35383a;">Transfer</div>
<div class="t" style="left:10.40px;top:322.44px;font-size:12px;color:#35383a;">Transfer</div>
<div class="t" style="left:10.40px;top:350.44px;font-size:12px;color:#35383a;">Transfer</div>
<div class="t" style="left:10.40px;top:378.44px;font-size:12px;color:#35383a;">Transfer</div>
</div>
</div>
<div class="r" style="left:713px;top:521px;width:17px;height:20px;background:#f0f1f4;border-radius:3px"></div>
<div class="t" style="left:421.50px;width:600px;text-align:center;top:525.69px;font-size:11px;color:#8a8e91;">1</div>
<svg class="r" style="left:735.8px;top:527.4px" width="10.700000000000045" height="6.900000000000091"><polyline points="2,2 5.350000000000023,4.900000000000091 8.700000000000045,2" fill="none" stroke="#2a2c2e" stroke-width="1.215" stroke-linecap="round" stroke-linejoin="round"/></svg>
<div class="r" style="left:1479px;top:521px;width:19px;height:20px;background:#f0f1f4;border-radius:3px"></div>
<div class="t" style="left:1188.50px;width:600px;text-align:center;top:525.69px;font-size:11px;color:#8a8e91;">0</div>
<svg class="r" style="left:1503.8px;top:527.4px" width="10.700000000000045" height="6.900000000000091"><polyline points="2,2 5.350000000000023,4.900000000000091 8.700000000000045,2" fill="none" stroke="#2a2c2e" stroke-width="1.215" stroke-linecap="round" stroke-linejoin="round"/></svg>
<div class="r" style="left:20px;top:20px;width:1px;height:981px;background:#dfe2ea;"></div>
</body></html>
